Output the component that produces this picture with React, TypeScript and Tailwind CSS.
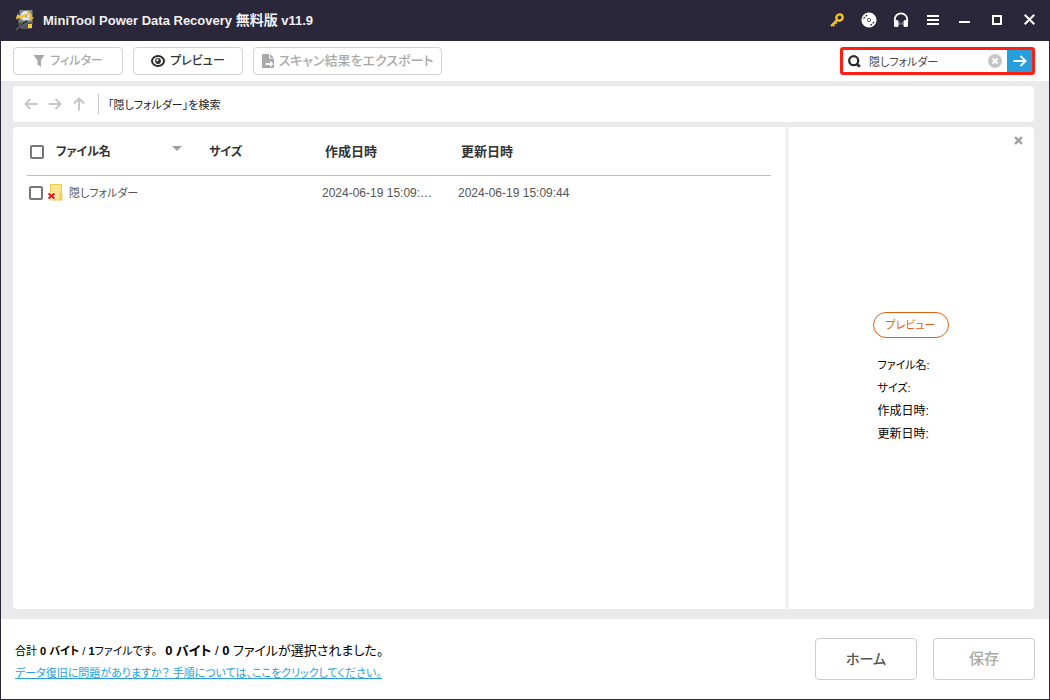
import { useState } from "react";

const files = [
  {
    name: "隠しフォルダー",
    size: "",
    created: "2024-06-19 15:09:44",
    updated: "2024-06-19 15:09:44",
  },
];

const Logo = () => (
  <svg width="20" height="22" viewBox="0 0 20 22" aria-hidden="true">
    <path d="M4 1h14v13l-2 6H6L3 14z" fill="#55585b" />
    <path d="M5 1h12v12H4z" fill="#83878a" />
    <ellipse cx="11" cy="7" rx="5.5" ry="5" fill="#e4e6e5" />
    <circle cx="11" cy="7" r="1.4" fill="#9a9d9c" />
    <path d="M1 9l2-5v2c3 1 5 0 7-1l1 2c-3 2-5 3-8 2l-1 2z" fill="#f8c52c" />
    <path d="M13 3c2 0 4 2 4 5h2l-3 4-3-4h2c0-2-1-3-3-3z" fill="#f3b321" />
    <path d="M1 21l7-8 4-2 1 2-4 2z" fill="#24262a" stroke="#85878a" strokeWidth=".6" />
    <rect x="13" y="15" width="4" height="4" fill="#f7cd38" />
  </svg>
);

const KeyIcon = () => (
  <svg width="14" height="14" viewBox="0 0 14 14" fill="none" stroke="#fcc419" aria-hidden="true">
    <ellipse cx="9.5" cy="4.5" rx="3.3" ry="3" transform="rotate(-45 9.5 4.5)" strokeWidth="2.4" />
    <path d="M7.2 6.8L1 13M2.2 10.8l2.2 2.2M4.4 8.6l2.2 2.2" strokeWidth="2" />
  </svg>
);

const DiscIcon = () => (
  <svg width="16" height="16" viewBox="0 0 16 16" aria-hidden="true">
    <circle cx="8" cy="8" r="7.6" fill="#fff" />
    <circle cx="8" cy="8" r="1.6" fill="none" stroke="#5b5968" strokeWidth="1" />
    <path
      d="M2.5 6.5L6.5 2.5M9.5 13.5L13.5 9.5"
      stroke="#2a273a"
      strokeWidth="1.2"
      strokeDasharray="2 1"
    />
  </svg>
);

const HeadsetIcon = () => (
  <svg width="16" height="16" viewBox="0 0 16 16" aria-hidden="true">
    <path d="M1.8 10V7.5a6.2 6.2 0 0 1 12.4 0V10" fill="none" stroke="#fff" strokeWidth="1.8" />
    <rect x="1" y="8" width="4.5" height="7" rx="1.5" fill="#fff" />
    <rect x="10.5" y="8" width="4.5" height="7" rx="1.5" fill="#fff" />
    <path d="M6.5 10v3M8 10.5v2M9.5 10v3" stroke="#8d8b99" strokeWidth=".8" />
  </svg>
);

const MenuIcon = () => (
  <svg width="12" height="12" viewBox="0 0 12 12" fill="#fff" aria-hidden="true">
    <path d="M0 1h12v2H0zM0 5h12v2H0zM0 9h12v2H0z" />
  </svg>
);

const MinimizeIcon = () => (
  <svg width="12" height="12" viewBox="0 0 12 12" fill="#fff" aria-hidden="true">
    <path d="M0 7h11v2H0z" />
  </svg>
);

const MaximizeIcon = () => (
  <svg width="10" height="10" viewBox="0 0 10 10" fill="none" stroke="#fff" strokeWidth="2" aria-hidden="true">
    <path d="M1 1h8v8H1z" />
  </svg>
);

const CloseIcon = () => (
  <svg width="11" height="11" viewBox="0 0 11 11" fill="none" stroke="#fff" strokeWidth="2" aria-hidden="true">
    <path d="M.7.7l9.6 9.6M10.3.7L.7 10.3" />
  </svg>
);

const FunnelIcon = () => (
  <svg width="12" height="12" viewBox="0 0 12 12" fill="#a9a9a9" aria-hidden="true">
    <path d="M.5 0h11L8 5.5V12L4.5 9.5v-4z" />
  </svg>
);

const EyeIcon = () => (
  <svg width="14" height="12" viewBox="0 0 14 12" aria-hidden="true">
    <ellipse cx="7" cy="6" rx="6" ry="4.9" fill="#fff" stroke="#2b2b2b" strokeWidth="2" />
    <circle cx="7" cy="6" r="2.9" fill="#2b2b2b" />
    <path d="M7.4 6.2V3.6a2.4 2.4 0 0 0-2.2 2.6z" fill="#fff" />
  </svg>
);

const ExportIcon = () => (
  <svg width="13" height="14" viewBox="0 0 13 14" aria-hidden="true">
    <path d="M1 0h6v4.5h5V13a1 1 0 0 1-1 1H1a1 1 0 0 1-1-1V1a1 1 0 0 1 1-1z" fill="#a9a9a9" />
    <path d="M8 0l4 3.7H8z" fill="#a9a9a9" />
    <path d="M3.5 9H8V6.8l3.5 3.2L8 13v-2H3.5z" fill="#fff" />
  </svg>
);

const ArrowIcon = ({ className }: { className?: string }) => (
  <svg
    className={className}
    width="14"
    height="14"
    viewBox="0 0 14 14"
    fill="none"
    stroke="currentColor"
    strokeWidth="2"
    aria-hidden="true"
  >
    <path d="M.5 7h12M7.5 2l5 5-5 5" />
  </svg>
);

const SearchIcon = () => (
  <svg width="13" height="13" viewBox="0 0 13 13" fill="none" stroke="#2b2b2b" aria-hidden="true">
    <circle cx="5.7" cy="5.7" r="4.5" strokeWidth="2.3" />
    <path d="M8.5 8.8l3.5 3" strokeWidth="2.6" />
  </svg>
);

const ClearIcon = () => (
  <svg width="14" height="14" viewBox="0 0 14 14" aria-hidden="true">
    <circle cx="7" cy="7" r="7" fill="#c6c6c6" />
    <path d="M4.5 4.5l5 5M9.5 4.5l-5 5" stroke="#fff" strokeWidth="1.8" />
  </svg>
);

const FolderIcon = () => (
  <svg width="16" height="18" viewBox="0 0 16 18" aria-hidden="true">
    <path d="M3.5 .5h11V16h-11z" fill="#fee594" stroke="#f0cb4e" />
    <path d="M13 9.5h2V16h-2z" fill="#fbd96b" stroke="#e8bf45" strokeWidth=".8" />
    <path d="M1.500 9.500l6 5M7.500 9.500l-6 5" stroke="#fff" strokeWidth="3.4" />
    <path d="M1.500 9.500l6 5M7.500 9.500l-6 5" stroke="#f00d0d" strokeWidth="2" />
  </svg>
);

const checkbox =
  "block size-[14px] shrink-0 appearance-none rounded-[2px] border-2 border-[#777] bg-white checked:bg-[#777]";

const toolButton =
  "flex h-7 items-center justify-center rounded border border-[#d2d2d2] bg-white font-medium whitespace-nowrap";

const titleButton = "flex h-8 w-8 items-center justify-center";

const App = () => {
  const [query, setQuery] = useState("隠しフォルダー");

  return (
    <div className="flex h-screen flex-col overflow-hidden border border-t-0 border-[#2a273a] bg-white font-['Liberation_Sans','Noto_Sans_CJK_JP',sans-serif] text-xs text-[#333] [font-feature-settings:'palt']">
      {/* Title bar */}
      <header className="flex h-[41px] shrink-0 items-center bg-[#2a273a] pr-1 pb-0.5 pl-[14px] text-white">
        <Logo />
        <h1 className="ml-2 flex-1 text-[13px] font-bold text-[#f1f1f4]">
          MiniTool Power Data Recovery <span className="text-sm">無料版</span> v11.9
        </h1>
        <button className={titleButton} aria-label="登録"><KeyIcon /></button>
        <button className={titleButton} aria-label="ブータブル"><DiscIcon /></button>
        <button className={titleButton} aria-label="サポート"><HeadsetIcon /></button>
        <button className={titleButton} aria-label="メニュー"><MenuIcon /></button>
        <button className={titleButton} aria-label="最小化"><MinimizeIcon /></button>
        <button className={titleButton} aria-label="最大化"><MaximizeIcon /></button>
        <button className={titleButton} aria-label="閉じる"><CloseIcon /></button>
      </header>

      {/* Toolbar */}
      <div className="flex h-10 shrink-0 items-center gap-[10px] pr-[14px] pl-3">
        <button className={`${toolButton} w-[110px] gap-[5px] text-xs text-[#a9a9a9]`} disabled>
          <FunnelIcon />
          フィルター
        </button>
        <button className={`${toolButton} w-[110px] gap-[5px] text-xs text-[#333]`}>
          <EyeIcon />
          プレビュー
        </button>
        <button className={`${toolButton} w-[189px] gap-1 text-[13px] text-[#a9a9a9]`} disabled>
          <ExportIcon />
          スキャン結果をエクスポート
        </button>
        <form
          className="ml-auto flex h-7 w-[195px] items-center rounded-[3px] border-3 border-[#ff1e14] bg-white pl-[5px]"
          onSubmit={(e) => e.preventDefault()}
        >
          <SearchIcon />
          <input
            type="text"
            aria-label="検索"
            className="ml-2 h-5 min-w-0 flex-1 bg-transparent text-[11px] text-[#444] outline-none"
            value={query}
            onChange={(e) => setQuery(e.target.value)}
          />
          <button type="button" className="mr-[5px]" aria-label="クリア" onClick={() => setQuery("")}>
            <ClearIcon />
          </button>
          <button
            type="submit"
            className="flex w-[25px] items-center justify-center self-stretch bg-[#279fdb] text-white"
            aria-label="検索する"
          >
            <ArrowIcon />
          </button>
        </form>
      </div>

      <main className="flex min-h-0 flex-1 flex-col gap-[5px] bg-[#eaeaea] pt-[5px] pr-[15px] pb-[10px] pl-3">
        {/* Path bar */}
        <nav className="flex h-9 shrink-0 items-center rounded bg-white pl-[11px] text-[#c6c6c6]">
          <button aria-label="戻る"><ArrowIcon className="rotate-180" /></button>
          <button className="ml-[10px]" aria-label="進む"><ArrowIcon /></button>
          <button className="ml-[10px]" aria-label="上へ"><ArrowIcon className="-rotate-90" /></button>
          <span className="ml-3 h-5 w-px bg-[#c6c6c6]" />
          <span className="ml-[9px] pt-0.5 text-[11px] text-[#222]">「隠しフォルダー」を検索</span>
        </nav>

        <div className="flex min-h-0 flex-1 overflow-hidden rounded bg-white">
          {/* File list */}
          <section className="min-w-0 flex-1 px-[14px]">
            <table className="w-full table-fixed border-collapse text-left">
              <colgroup>
                <col className="w-[179px]" />
                <col className="w-[116px]" />
                <col className="w-[136px]" />
                <col />
              </colgroup>
              <thead>
                <tr className="h-12 border-b border-[#bdbdbd] text-[13px] text-[#333]">
                  <th className="p-0">
                    <div className="flex items-center pt-[2px] pl-[3px]">
                      <input type="checkbox" className={checkbox} aria-label="すべて選択" />
                      <span className="ml-3 flex-1 text-xs">ファイル名</span>
                      <svg className="mr-6 mb-1.5" width="10" height="5" viewBox="0 0 10 5" fill="#a0a0a0" aria-hidden="true">
                        <path d="M0 0h10L5 5z" />
                      </svg>
                    </div>
                  </th>
                  <th className="p-0 pt-[2px] pl-[3px] text-xs">サイズ</th>
                  <th className="p-0 pt-[2px] pl-[3px]">作成日時</th>
                  <th className="p-0 pt-[2px] pl-[3px]">更新日時</th>
                </tr>
              </thead>
              <tbody>
                {files.map((file) => (
                  <tr key={file.name} className="h-9 text-[#555]">
                    <td className="p-0">
                      <label className="flex items-center pl-[2px]">
                        <input type="checkbox" className={checkbox} />
                        <span className="ml-1"><FolderIcon /></span>
                        <span className="ml-[6px] text-[11px]">{file.name}</span>
                      </label>
                    </td>
                    <td className="p-0">{file.size}</td>
                    <td className="truncate p-0 pr-[25px] text-xs">{file.created}</td>
                    <td className="truncate p-0 text-xs">{file.updated}</td>
                  </tr>
                ))}
              </tbody>
            </table>
          </section>

          {/* Preview panel */}
          <aside className="flex w-[249px] shrink-0 flex-col border-l-4 border-[#f0f0f5]">
            <button className="mt-[9px] mr-[11px] self-end" aria-label="プレビューを閉じる">
              <svg width="9" height="9" viewBox="0 0 9 9" stroke="#a0a0a0" strokeWidth="2.4" aria-hidden="true">
                <path d="M1 1l7 7M8 1L1 8" />
              </svg>
            </button>
            <div className="flex flex-1 flex-col items-center justify-center pt-1 pr-[2px]">
              <button className="h-[26px] w-[76px] rounded-full border border-[#e0600f] text-[11px] text-[#e0600f]">
                プレビュー
              </button>
              <ul className="mt-4 w-[66px] text-xs leading-[23px] text-black">
                <li className="text-[11px]">ファイル名:</li>
                <li className="text-[11px]">サイズ:</li>
                <li>作成日時:</li>
                <li>更新日時:</li>
              </ul>
            </div>
          </aside>
        </div>
      </main>

      {/* Status bar */}
      <footer className="flex h-20 shrink-0 items-center bg-white px-[14px]">
        <div className="flex-1 pt-1 text-black">
          <p className="flex items-center leading-6 whitespace-pre">
            <span className="text-[11px]">
              合計 <b>0 バイト</b> / <b>1</b>ファイルです。
            </span>
            <span className="ml-2 text-[13px]">
              <b>0 バイト</b> / <b>0</b> ファイルが選択されました。
            </span>
          </p>
          <a href="#help" className="block text-[11px] leading-5 text-[#279fdb] underline">
            データ復旧に問題がありますか？ 手順については、ここをクリックしてください。
          </a>
        </div>
        <div className="flex gap-4 font-medium">
          <button className="h-[42px] w-[102px] rounded border border-[#cdcdcd] text-sm text-[#555]">ホーム</button>
          <button className="h-[42px] w-[102px] rounded border border-[#cdcdcd] text-[15px] text-[#a9a9a9]" disabled>
            保存
          </button>
        </div>
      </footer>
    </div>
  );
};

export default App;
